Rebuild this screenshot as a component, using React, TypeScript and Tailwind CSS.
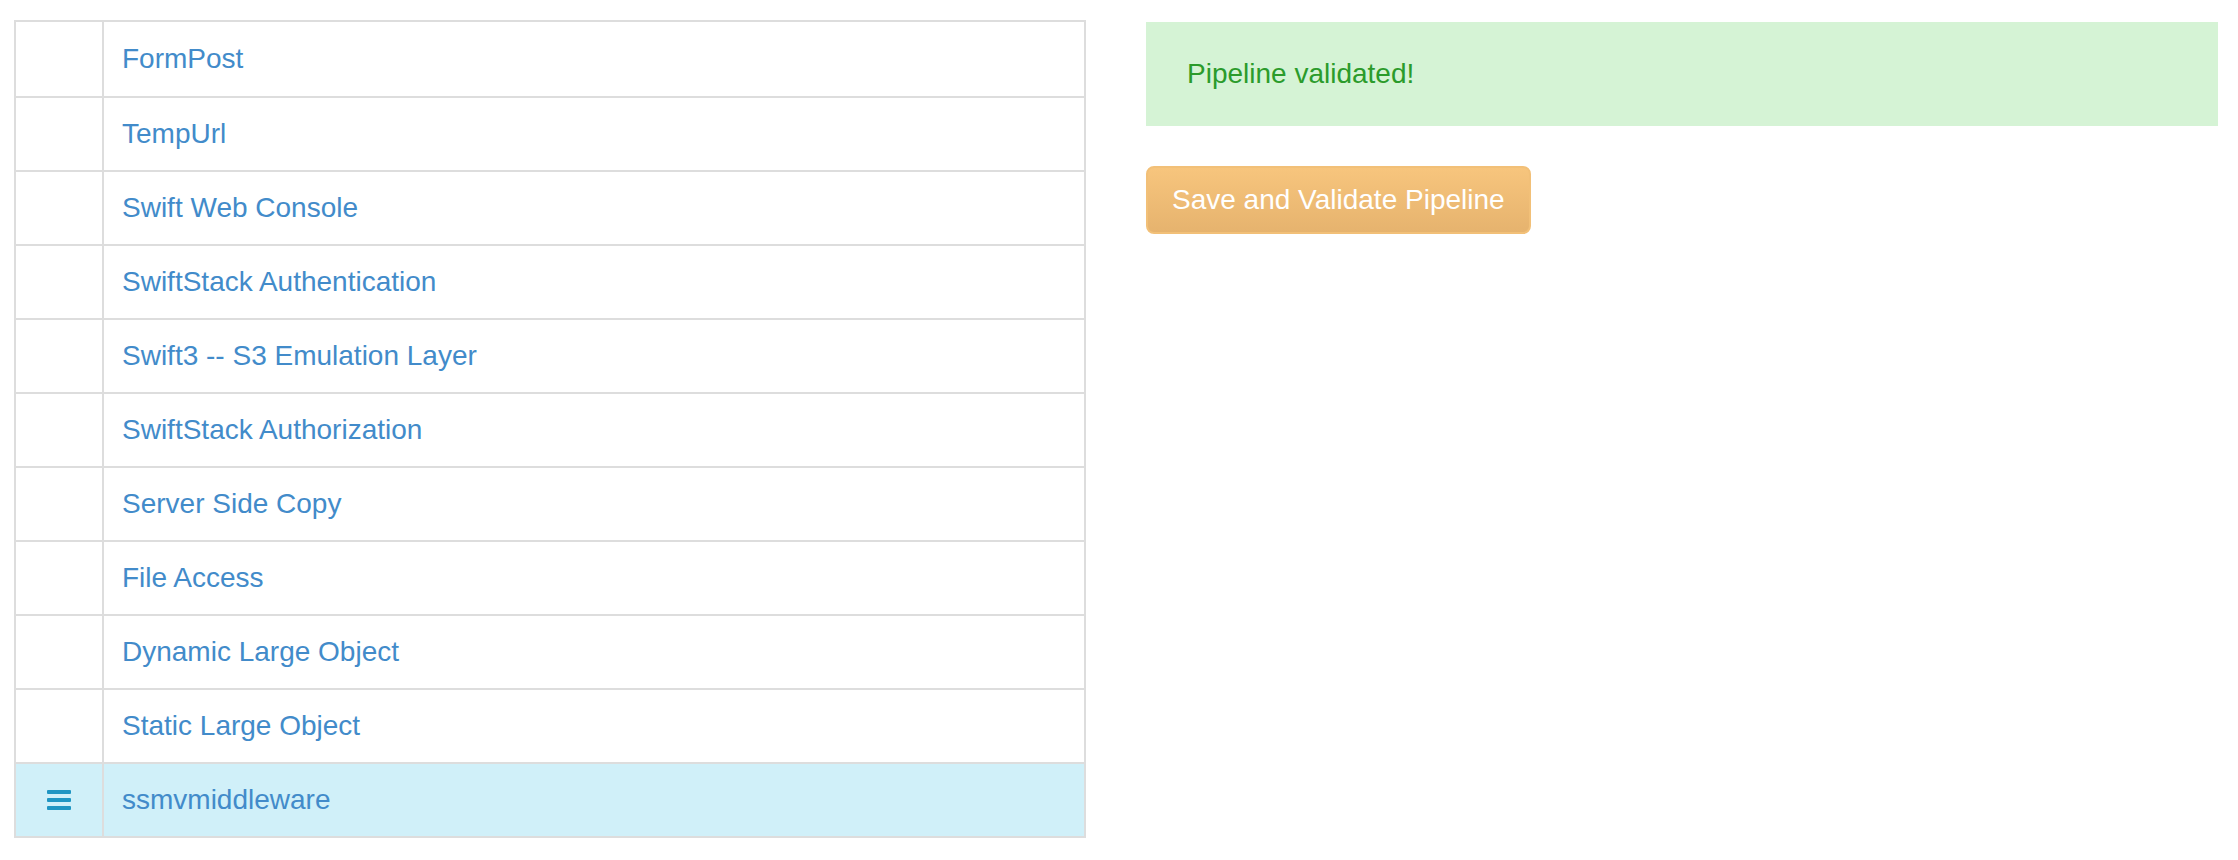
const ROWS = [
  "FormPost",
  "TempUrl",
  "Swift Web Console",
  "SwiftStack Authentication",
  "Swift3 -- S3 Emulation Layer",
  "SwiftStack Authorization",
  "Server Side Copy",
  "File Access",
  "Dynamic Large Object",
  "Static Large Object",
  "ssmvmiddleware",
];

function Hamburger() {
  return (
    <div className="flex w-[24px] flex-col gap-[4px]">
      <span className="h-[4px] rounded-[1px] bg-[#1f96c3]" />
      <span className="h-[4px] rounded-[1px] bg-[#1f96c3]" />
      <span className="h-[4px] rounded-[1px] bg-[#1f96c3]" />
    </div>
  );
}

export default function App() {
  return (
    <div className="flex min-h-screen items-start bg-white pl-[14px] pt-[20px] font-['Liberation_Sans',Arial,sans-serif] text-[28px] leading-[40px]">
      <div className="w-[1072px] border-2 border-[#ddd]">
        {ROWS.map((label, i) => {
          const active = i === ROWS.length - 1;
          return (
            <div
              key={label}
              className={`flex h-[74px] ${i > 0 ? "border-t-2 border-[#ddd]" : "h-[72px]"} ${active ? "bg-[#d0f0f9]" : ""}`}
            >
              <div className="flex w-[88px] shrink-0 items-center justify-center border-r-2 border-[#ddd]">
                {active && <Hamburger />}
              </div>
              <div className="flex flex-1 items-center pl-[18px] text-[#428bca]">{label}</div>
            </div>
          );
        })}
      </div>

      <div className="ml-[60px] mt-[2px] w-[1072px]">
        <div className="flex h-[104px] items-center bg-[#d5f3d5] pl-[41px] text-[#2b9b2b]">
          Pipeline validated!
        </div>
        <button className="mt-[40px] h-[68px] rounded-[8px] border-2 border-[#f2c078] bg-gradient-to-b from-[#f7c57d] to-[#e6b36e] px-[24px] text-white">
          Save and Validate Pipeline
        </button>
      </div>
    </div>
  );
}
